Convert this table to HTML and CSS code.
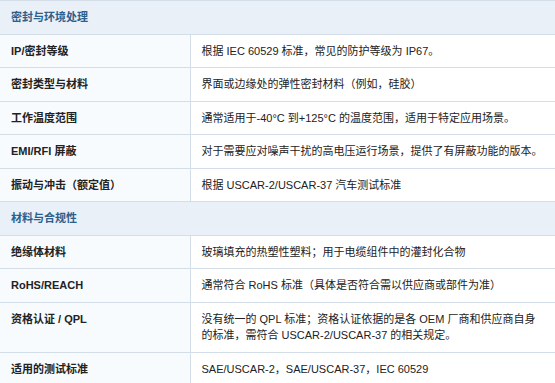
FILE: index.html
```html
<!DOCTYPE html>
<html lang="zh">
<head>
<meta charset="utf-8">
<link rel="stylesheet" href="styles.css">
</head>
<body>
<table class="spec">
  <colgroup><col class="col-k"><col class="col-v"></colgroup>
  <tbody>
    <tr class="section"><th colspan="2">密封与环境处理</th></tr>
    <tr><td class="k">IP/密封等级</td><td class="v">根据 IEC 60529 标准，常见的防护等级为 IP67。</td></tr>
    <tr><td class="k">密封类型与材料</td><td class="v">界面或边缘处的弹性密封材料（例如，硅胶）</td></tr>
    <tr><td class="k">工作温度范围</td><td class="v">通常适用于-40°C 到+125°C 的温度范围，适用于特定应用场景。</td></tr>
    <tr><td class="k">EMI/RFI 屏蔽</td><td class="v">对于需要应对噪声干扰的高电压运行场景，提供了有屏蔽功能的版本。</td></tr>
    <tr><td class="k">振动与冲击（额定值）</td><td class="v">根据 USCAR-2/USCAR-37 汽车测试标准</td></tr>
    <tr class="section"><th colspan="2">材料与合规性</th></tr>
    <tr><td class="k">绝缘体材料</td><td class="v">玻璃填充的热塑性塑料；用于电缆组件中的灌封化合物</td></tr>
    <tr><td class="k">RoHS/REACH</td><td class="v">通常符合 RoHS 标准（具体是否符合需以供应商或部件为准）</td></tr>
    <tr><td class="k">资格认证 / QPL</td><td class="v">没有统一的 QPL 标准；资格认证依据的是各 OEM 厂商和供应商自身的标准，需符合 USCAR-2/USCAR-37 的相关规定。</td></tr>
    <tr><td class="k">适用的测试标准</td><td class="v">SAE/USCAR-2，SAE/USCAR-37，IEC 60529</td></tr>
  </tbody>
</table>
</body>
</html>
```
FILE: styles.css
```css
html, body {
  margin: 0;
  padding: 0;
  background: #ffffff;
}
body {
  font-family: "Liberation Sans", "Noto Sans CJK SC", sans-serif;
  font-size: 11px;
  line-height: 16.5px;
  color: #222222;
  overflow: hidden;
}
.spec {
  border-collapse: collapse;
  width: 555px;
  table-layout: fixed;
}
.col-k {
  width: 190px;
}
.spec td, .spec th {
  border-top: 1px solid #d3dee9;
  border-bottom: 1px solid #d3dee9;
  padding: 8px 11px;
  text-align: left;
  vertical-align: top;
}
.section th {
  background: #e9f0f8;
  color: #2d5f8c;
  font-weight: bold;
}
.k {
  font-weight: bold;
  background: #f8fbfe;
  border-right: 1px solid #d3dee9;
}
.v {
  background: #ffffff;
}
```
